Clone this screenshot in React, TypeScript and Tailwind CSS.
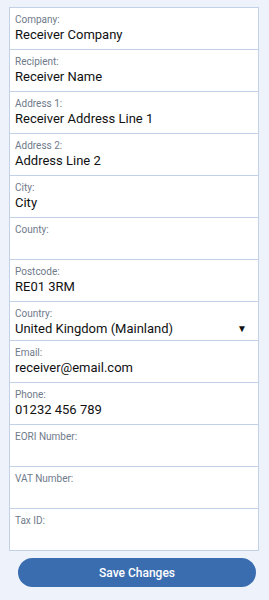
const fields: { label: string; value: string; select?: boolean }[] = [
  { label: "Company:", value: "Receiver Company" },
  { label: "Recipient:", value: "Receiver Name" },
  { label: "Address 1:", value: "Receiver Address Line 1" },
  { label: "Address 2:", value: "Address Line 2" },
  { label: "City:", value: "City" },
  { label: "County:", value: "" },
  { label: "Postcode:", value: "RE01 3RM" },
  { label: "Country:", value: "United Kingdom (Mainland)", select: true },
  { label: "Email:", value: "receiver@email.com" },
  { label: "Phone:", value: "01232 456 789" },
  { label: "EORI Number:", value: "" },
  { label: "VAT Number:", value: "" },
  { label: "Tax ID:", value: "" },
];

export default function App() {
  return (
    <div className="min-h-[600px] w-[269px] bg-[#eef3fb] pt-[7px] font-['Roboto',sans-serif]">
      <div className="ml-[9px] mr-[10px] border border-[#c3d1e6] bg-white">
        {fields.map((f, i) => {
          const last = i === fields.length - 1;
          return (
            <div
              key={f.label}
              className={`flex flex-col px-[5px] pt-[6px] ${f.select ? "h-[39px]" : last ? "h-[41px]" : "h-[42px]"} ${
                last ? "" : "border-b border-[#c3d1e6]"
              }`}
            >
              <span className="text-[10px] leading-[12px] text-[#6f7a8a]">{f.label}</span>
              <div className="mt-[1px] flex items-center justify-between text-[13px] leading-[16px] text-[#111111]">
                <span>{f.value}</span>
                {f.select && <span className="mr-[6px] text-[10px] text-[#111]">▼</span>}
              </div>
            </div>
          );
        })}
      </div>
      <div className="pl-[18px] pr-[13px] pt-[7px]">
        <button className="h-[29px] w-full rounded-full bg-[#3a6db0] text-[12px] font-medium text-white">
          Save Changes
        </button>
      </div>
    </div>
  );
}
